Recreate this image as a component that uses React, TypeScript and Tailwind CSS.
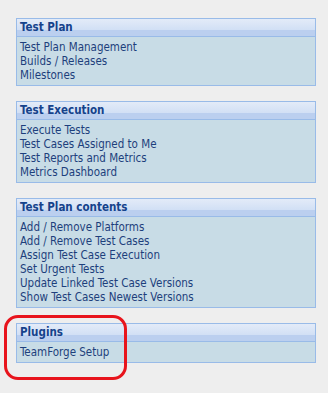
import React from "react";

interface MenuBlock {
  title: string;
  links: string[];
}

const blocks: MenuBlock[] = [
  {
    title: "Test Plan",
    links: ["Test Plan Management", "Builds / Releases", "Milestones"],
  },
  {
    title: "Test Execution",
    links: [
      "Execute Tests",
      "Test Cases Assigned to Me",
      "Test Reports and Metrics",
      "Metrics Dashboard",
    ],
  },
  {
    title: "Test Plan contents",
    links: [
      "Add / Remove Platforms",
      "Add / Remove Test Cases",
      "Assign Test Case Execution",
      "Set Urgent Tests",
      "Update Linked Test Case Versions",
      "Show Test Cases Newest Versions",
    ],
  },
  {
    title: "Plugins",
    links: ["TeamForge Setup"],
  },
];

export default function App() {
  return (
    <div
      className="relative w-[328px] h-[393px] bg-[#eeeeee] overflow-hidden"
      style={{ fontFamily: '"DejaVu Sans Condensed", "DejaVu Sans", "Liberation Sans", sans-serif' }}
    >
      <div className="flex flex-col gap-[15px] pt-[18px] pl-4 w-[316px]">
        {blocks.map((block) => (
          <div key={block.title} className="w-[300px] border border-[#99bbe8] bg-[#c8dce6]">
            {/* header strip */}
            <div className="h-[18px] border-b border-[#99bbe8] bg-[linear-gradient(to_bottom,#e3ebf8_0%,#d2e0f5_62%,#bbcfef_62%,#bbcfef_100%)] pl-[3px] text-[11.5px] font-bold leading-[17px] text-[#15428b]">
              {block.title}
            </div>
            <div className="flex flex-col py-[3px] pl-[3px]">
              {block.links.map((link) => (
                <a key={link} className="text-[11.5px] leading-[14px] text-[#1d3f7c] cursor-pointer">
                  {link}
                </a>
              ))}
            </div>
          </div>
        ))}
      </div>

      {/* red marker around Plugins */}
      <div className="absolute left-[4px] top-[315px] w-[123px] h-[65px] rounded-[14px] border-[3px] border-[#e8141c]" />
    </div>
  );
}
